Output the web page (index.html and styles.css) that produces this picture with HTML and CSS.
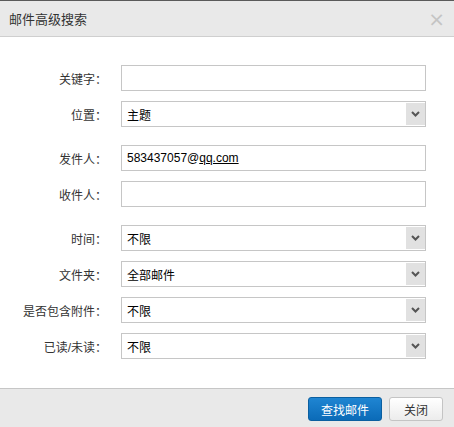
FILE: index.html
```html
<!DOCTYPE html>
<html lang="zh">
<head>
<meta charset="utf-8">
<title>邮件高级搜索</title>
<link rel="stylesheet" href="styles.css">
</head>
<body>
<div class="dialog">
  <div class="header">
    <span class="title">邮件高级搜索</span>
    <span class="close">×</span>
  </div>
  <div class="content">
    <div class="group">
      <div class="row"><label class="lbl">关键字：</label><div class="field input"></div></div>
      <div class="row"><label class="lbl">位置：</label><div class="field select"><span class="val">主题</span><span class="arrow"><svg width="9" height="6" viewBox="0 0 9 6"><path d="M1 1 L4.5 4.5 L8 1" fill="none" stroke="#555" stroke-width="2"/></svg></span></div></div>
    </div>
    <div class="group">
      <div class="row"><label class="lbl">发件人：</label><div class="field input"><span class="val">583437057@<span class="ul">qq.com</span></span></div></div>
      <div class="row"><label class="lbl">收件人：</label><div class="field input"></div></div>
    </div>
    <div class="group">
      <div class="row"><label class="lbl">时间：</label><div class="field select"><span class="val">不限</span><span class="arrow"><svg width="9" height="6" viewBox="0 0 9 6"><path d="M1 1 L4.5 4.5 L8 1" fill="none" stroke="#555" stroke-width="2"/></svg></span></div></div>
      <div class="row"><label class="lbl">文件夹：</label><div class="field select"><span class="val">全部邮件</span><span class="arrow"><svg width="9" height="6" viewBox="0 0 9 6"><path d="M1 1 L4.5 4.5 L8 1" fill="none" stroke="#555" stroke-width="2"/></svg></span></div></div>
      <div class="row"><label class="lbl">是否包含附件：</label><div class="field select"><span class="val">不限</span><span class="arrow"><svg width="9" height="6" viewBox="0 0 9 6"><path d="M1 1 L4.5 4.5 L8 1" fill="none" stroke="#555" stroke-width="2"/></svg></span></div></div>
      <div class="row"><label class="lbl">已读/未读：</label><div class="field select"><span class="val">不限</span><span class="arrow"><svg width="9" height="6" viewBox="0 0 9 6"><path d="M1 1 L4.5 4.5 L8 1" fill="none" stroke="#555" stroke-width="2"/></svg></span></div></div>
    </div>
  </div>
  <div class="footer">
    <button class="btn primary">查找邮件</button>
    <button class="btn">关闭</button>
  </div>
</div>
</body>
</html>
```
FILE: styles.css
```css
html, body {
  margin: 0;
  padding: 0;
  background: #fff;
}
body {
  font-family: "Liberation Sans", "Noto Sans CJK SC", sans-serif;
  font-size: 12px;
  color: #333;
}
.dialog {
  width: 454px;
  height: 427px;
  box-sizing: border-box;
  border-top: 1px solid #5a5a5a;
  display: flex;
  flex-direction: column;
}
.header {
  height: 36px;
  box-sizing: border-box;
  flex: none;
  background: #e9e9e9;
  border-bottom: 1px solid #cfcfcf;
  display: flex;
  align-items: center;
  justify-content: space-between;
  padding: 0 9px 0 9px;
}
.title {
  font-size: 13px;
  color: #333;
}
.close {
  font-size: 20px;
  color: #c4c4c4;
  line-height: 1;
  font-family: "DejaVu Sans", sans-serif;
}
.content {
  flex: 1;
  padding-top: 28px;
  display: flex;
  flex-direction: column;
  gap: 18px;
}
.group {
  display: flex;
  flex-direction: column;
  gap: 10px;
}
.row {
  display: grid;
  grid-template-columns: 107px 305px;
  column-gap: 14px;
  align-items: center;
  height: 26px;
}
.lbl {
  text-align: right;
  color: #333;
}
.field {
  height: 26px;
  box-sizing: border-box;
  border: 1px solid #c6c6c6;
  background: #fff;
  display: flex;
  align-items: center;
  padding-left: 5px;
  color: #000;
}
.ul {
  text-decoration: underline;
}
.select {
  justify-content: space-between;
}
.arrow {
  align-self: stretch;
  width: 19px;
  margin: 1px 0;
  background: #e1e1e1;
  display: flex;
  align-items: center;
  justify-content: center;
}
.arrow svg {
  display: block;
}
.footer {
  height: 39px;
  box-sizing: border-box;
  flex: none;
  background: #e9e9e9;
  border-top: 1px solid #c6c6c6;
  display: flex;
  justify-content: flex-end;
  align-items: flex-start;
  padding: 8px 11px 0 0;
  gap: 7px;
}
.btn {
  height: 24px;
  padding: 0;
  width: 54px;
  font-family: "Liberation Sans", "Noto Sans CJK SC", sans-serif;
  font-size: 12px;
  border-radius: 3px;
  border: 1px solid #c4c4c4;
  background: linear-gradient(#ffffff, #ececec);
  color: #333;
}
.btn.primary {
  width: 74px;
  color: #fff;
  border: 1px solid #0b5fa0;
  background: linear-gradient(#1f85d2, #0b6bb8);
}
```
